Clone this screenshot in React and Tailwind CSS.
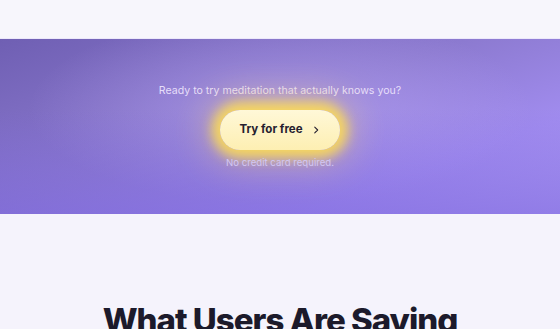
import React from 'react';

const Chevron = () => (
    <svg width="10" height="10" viewBox="0 0 24 24" fill="none" stroke="currentColor" strokeWidth="2.6" strokeLinecap="round" strokeLinejoin="round">
        <path d="M9 5l7 7-7 7" />
    </svg>
);

const App = () => {
    return (
        <div className="min-h-[329px] w-full bg-[#f5f3fc] font-['Inter',sans-serif] overflow-hidden">
            {/* top strip */}
            <div className="h-[39px] bg-[#f7f6fc] border-b border-[#ece8fa]" />

            {/* cta band */}
            <section className="h-[175px] flex flex-col items-center bg-[radial-gradient(ellipse_45%_55%_at_50%_40%,rgba(200,180,255,0.45),transparent),linear-gradient(160deg,#6f5fb3_0%,#8c7ad0_45%,#a18cef_75%,#ae9bf5_100%)] relative">
                <div className="absolute inset-0 bg-[linear-gradient(180deg,transparent_40%,rgba(122,100,220,0.55)_100%)] pointer-events-none" />
                <div className="relative flex flex-col items-center">
                    <p className="mt-[44px] text-[10.6px] text-[#e6defa]">
                        Ready to try meditation that actually knows you?
                    </p>
                    <button className="mt-[11px] h-[40px] px-[19px] rounded-full flex items-center gap-[8px] bg-[linear-gradient(180deg,#fff8d8_0%,#fdefb2_100%)] shadow-[0_0_12px_8px_rgba(255,222,80,0.85),0_0_36px_14px_rgba(255,214,110,0.4)] text-[#25202f] text-[11.5px] font-bold">
                        Try for free
                        <Chevron />
                    </button>
                    <p className="mt-[6px] text-[9.6px] text-[#d2c7f5]">No credit card required.</p>
                </div>
            </section>

            {/* testimonials heading */}
            <section className="flex justify-center pt-[90px]">
                <h2 className="text-[33px] leading-none font-extrabold text-[#1c1a2b] tracking-[-1px]">
                    What Users Are Saying
                </h2>
            </section>
        </div>
    );
};

export default App;
